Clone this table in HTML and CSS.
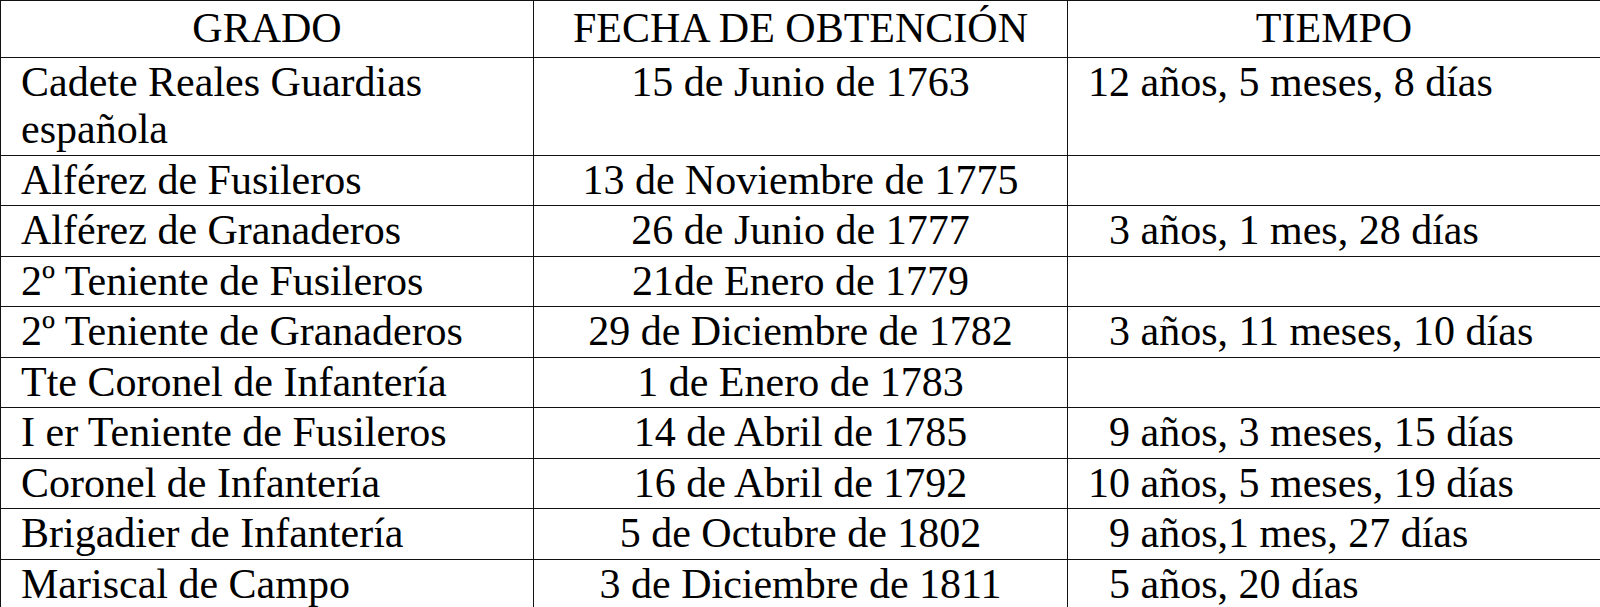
FILE: index.html
```html
<!DOCTYPE html>
<html lang="es">
<head>
<meta charset="utf-8">
<title>Grados</title>
<link rel="stylesheet" href="styles.css">
</head>
<body>
<table class="grados">
  <colgroup>
    <col class="c1">
    <col class="c2">
    <col class="c3">
  </colgroup>
  <thead>
    <tr>
      <th>GRADO</th>
      <th>FECHA DE OBTENCIÓN</th>
      <th>TIEMPO</th>
    </tr>
  </thead>
  <tbody>
    <tr>
      <td class="grado">Cadete Reales Guardias<br>española</td>
      <td class="fecha">15 de Junio de 1763</td>
      <td class="tiempo">12 años, 5 meses, 8 días</td>
    </tr>
    <tr>
      <td class="grado">Alférez de Fusileros</td>
      <td class="fecha">13 de Noviembre de 1775</td>
      <td class="tiempo"></td>
    </tr>
    <tr>
      <td class="grado">Alférez de Granaderos</td>
      <td class="fecha">26 de Junio de 1777</td>
      <td class="tiempo ind">3 años, 1 mes, 28 días</td>
    </tr>
    <tr>
      <td class="grado">2º Teniente de Fusileros</td>
      <td class="fecha">21de Enero de 1779</td>
      <td class="tiempo"></td>
    </tr>
    <tr>
      <td class="grado">2º Teniente de Granaderos</td>
      <td class="fecha">29 de Diciembre de 1782</td>
      <td class="tiempo ind">3 años, 11 meses, 10 días</td>
    </tr>
    <tr>
      <td class="grado">Tte Coronel de Infantería</td>
      <td class="fecha">1 de Enero de 1783</td>
      <td class="tiempo"></td>
    </tr>
    <tr>
      <td class="grado">I er Teniente de Fusileros</td>
      <td class="fecha">14 de Abril de 1785</td>
      <td class="tiempo ind">9 años, 3 meses, 15 días</td>
    </tr>
    <tr>
      <td class="grado">Coronel de Infantería</td>
      <td class="fecha">16 de Abril de 1792</td>
      <td class="tiempo">10 años, 5 meses, 19 días</td>
    </tr>
    <tr>
      <td class="grado">Brigadier de Infantería</td>
      <td class="fecha">5 de Octubre de 1802</td>
      <td class="tiempo ind">9 años,1 mes, 27 días</td>
    </tr>
    <tr>
      <td class="grado">Mariscal de Campo</td>
      <td class="fecha">3 de Diciembre de 1811</td>
      <td class="tiempo ind">5 años, 20 días</td>
    </tr>
  </tbody>
</table>
</body>
</html>
```
FILE: styles.css
```css
html, body {
  margin: 0;
  padding: 0;
  background: #ffffff;
}

body {
  font-family: "Liberation Serif", "Times New Roman", serif;
  color: #000000;
}

.grados {
  border-collapse: collapse;
  table-layout: fixed;
  width: 1600px;
  font-size: 42px;
  line-height: 47.5px;
}

.c1 { width: 533px; }
.c2 { width: 534px; }
.c3 { width: 533px; }

.grados th,
.grados td {
  border: 1.5px solid #111111;
  vertical-align: top;
  white-space: nowrap;
}

.grados th {
  font-weight: normal;
  text-align: center;
  padding: 4px 20px 4px;
}

.grados td {
  padding: 1px 20px 1px;
}

.grado { text-align: left; }
.fecha { text-align: center; }
.tiempo { text-align: left; }
.tiempo.ind { padding-left: 41px; }
```
